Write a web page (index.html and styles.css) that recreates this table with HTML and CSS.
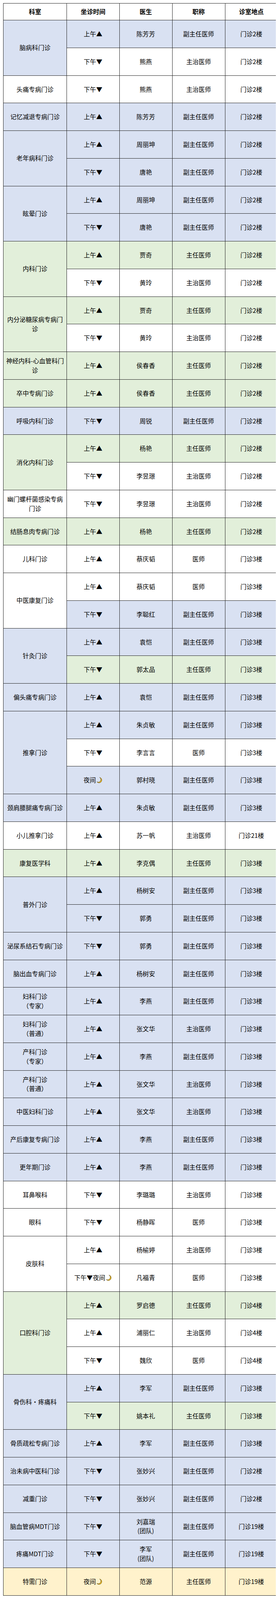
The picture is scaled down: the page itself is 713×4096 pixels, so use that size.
FILE: index.html
```html
<!DOCTYPE html>
<html lang="zh-CN">
<head>
<meta charset="utf-8">
<title>门诊坐诊表</title>
<link rel="stylesheet" href="styles.css">
</head>
<body>
<table class="schedule">
<colgroup>
<col class="c-dept"><col class="c-time"><col class="c-doc"><col class="c-title"><col class="c-loc">
</colgroup>
<thead>
<tr><th>科室</th><th>坐诊时间</th><th>医生</th><th>职称</th><th>诊室地点</th></tr>
</thead>
<tbody>
<tr class="b"><td class="dept" rowspan="2">脑病科门诊</td><td>上午▲</td><td>陈芳芳</td><td>副主任医师</td><td>门诊2楼</td></tr>
<tr class="w"><td>下午▼</td><td>熊燕</td><td>主治医师</td><td>门诊2楼</td></tr>
<tr class="w"><td class="dept">头痛专病门诊</td><td>下午▼</td><td>熊燕</td><td>主治医师</td><td>门诊2楼</td></tr>
<tr class="b"><td class="dept">记忆减退专病门诊</td><td>上午▲</td><td>陈芳芳</td><td>副主任医师</td><td>门诊2楼</td></tr>
<tr class="b"><td class="dept" rowspan="2">老年病科门诊</td><td>上午▲</td><td>周丽坤</td><td>副主任医师</td><td>门诊2楼</td></tr>
<tr class="b"><td>下午▼</td><td>唐艳</td><td>副主任医师</td><td>门诊2楼</td></tr>
<tr class="b"><td class="dept" rowspan="2">眩晕门诊</td><td>上午▲</td><td>周丽坤</td><td>副主任医师</td><td>门诊2楼</td></tr>
<tr class="b"><td>下午▼</td><td>唐艳</td><td>副主任医师</td><td>门诊2楼</td></tr>
<tr class="g"><td class="dept" rowspan="2">内科门诊</td><td>上午▲</td><td>贾奇</td><td>主任医师</td><td>门诊2楼</td></tr>
<tr class="w"><td>下午▼</td><td>黄玲</td><td>主治医师</td><td>门诊2楼</td></tr>
<tr class="g"><td class="dept" rowspan="2">内分泌糖尿病专病门<br>诊</td><td>上午▲</td><td>贾奇</td><td>主任医师</td><td>门诊2楼</td></tr>
<tr class="w"><td>下午▼</td><td>黄玲</td><td>主治医师</td><td>门诊2楼</td></tr>
<tr class="g"><td class="dept">神经内科-心血管科门<br>诊</td><td>上午▲</td><td>侯春香</td><td>主任医师</td><td>门诊2楼</td></tr>
<tr class="g"><td class="dept">卒中专病门诊</td><td>上午▲</td><td>侯春香</td><td>主任医师</td><td>门诊2楼</td></tr>
<tr class="b"><td class="dept">呼吸内科门诊</td><td>下午▼</td><td>周锐</td><td>副主任医师</td><td>门诊2楼</td></tr>
<tr class="g"><td class="dept" rowspan="2">消化内科门诊</td><td>上午▲</td><td>杨艳</td><td>主任医师</td><td>门诊2楼</td></tr>
<tr class="w"><td>下午▼</td><td>李昱璟</td><td>主治医师</td><td>门诊2楼</td></tr>
<tr class="w"><td class="dept">幽门螺杆菌感染专病<br>门诊</td><td>下午▼</td><td>李昱璟</td><td>主治医师</td><td>门诊2楼</td></tr>
<tr class="g"><td class="dept">结肠息肉专病门诊</td><td>上午▲</td><td>杨艳</td><td>主任医师</td><td>门诊2楼</td></tr>
<tr class="w"><td class="dept">儿科门诊</td><td>上午▲</td><td>蔡庆韬</td><td>医师</td><td>门诊3楼</td></tr>
<tr class="w"><td class="dept" rowspan="2">中医康复门诊</td><td>上午▲</td><td>蔡庆韬</td><td>医师</td><td>门诊3楼</td></tr>
<tr class="b"><td>下午▼</td><td>李聪红</td><td>副主任医师</td><td>门诊3楼</td></tr>
<tr class="b"><td class="dept" rowspan="2">针灸门诊</td><td>上午▲</td><td>袁恺</td><td>副主任医师</td><td>门诊3楼</td></tr>
<tr class="g"><td>下午▼</td><td>郭太品</td><td>主任医师</td><td>门诊3楼</td></tr>
<tr class="b"><td class="dept">偏头痛专病门诊</td><td>上午▲</td><td>袁恺</td><td>副主任医师</td><td>门诊3楼</td></tr>
<tr class="b"><td class="dept" rowspan="3">推拿门诊</td><td>上午▲</td><td>朱贞敏</td><td>副主任医师</td><td>门诊3楼</td></tr>
<tr class="w"><td>下午▼</td><td>李言言</td><td>医师</td><td>门诊3楼</td></tr>
<tr class="b"><td>夜间<svg class="moon" viewBox="0 0 16 16" aria-hidden="true"><path d="M8.6 1.2A7 7 0 1 1 1.6 12.4A6 6 0 0 0 8.6 1.2Z"/></svg></td><td>郭村晓</td><td>副主任医师</td><td>门诊3楼</td></tr>
<tr class="b"><td class="dept">颈肩腰腿痛专病门诊</td><td>上午▲</td><td>朱贞敏</td><td>副主任医师</td><td>门诊3楼</td></tr>
<tr class="w"><td class="dept">小儿推拿门诊</td><td>上午▲</td><td>苏一帆</td><td>主治医师</td><td>门诊21楼</td></tr>
<tr class="g"><td class="dept">康复医学科</td><td>上午▲</td><td>李克偶</td><td>主任医师</td><td>门诊3楼</td></tr>
<tr class="b"><td class="dept" rowspan="2">普外门诊</td><td>上午▲</td><td>杨树安</td><td>副主任医师</td><td>门诊3楼</td></tr>
<tr class="b"><td>下午▼</td><td>郭勇</td><td>副主任医师</td><td>门诊3楼</td></tr>
<tr class="b"><td class="dept">泌尿系结石专病门诊</td><td>下午▼</td><td>郭勇</td><td>副主任医师</td><td>门诊3楼</td></tr>
<tr class="b"><td class="dept">脑出血专病门诊</td><td>上午▲</td><td>杨树安</td><td>副主任医师</td><td>门诊3楼</td></tr>
<tr class="b"><td class="dept">妇科门诊<br>（专家）</td><td>上午▲</td><td>李燕</td><td>副主任医师</td><td>门诊3楼</td></tr>
<tr class="b"><td class="dept">妇科门诊<br>（普通）</td><td>上午▲</td><td>张文华</td><td>主治医师</td><td>门诊3楼</td></tr>
<tr class="b"><td class="dept">产科门诊<br>（专家）</td><td>上午▲</td><td>李燕</td><td>副主任医师</td><td>门诊3楼</td></tr>
<tr class="b"><td class="dept">产科门诊<br>（普通）</td><td>上午▲</td><td>张文华</td><td>主治医师</td><td>门诊3楼</td></tr>
<tr class="b"><td class="dept">中医妇科门诊</td><td>上午▲</td><td>张文华</td><td>主治医师</td><td>门诊3楼</td></tr>
<tr class="b"><td class="dept">产后康复专病门诊</td><td>上午▲</td><td>李燕</td><td>副主任医师</td><td>门诊3楼</td></tr>
<tr class="b"><td class="dept">更年期门诊</td><td>上午▲</td><td>李燕</td><td>副主任医师</td><td>门诊3楼</td></tr>
<tr class="w"><td class="dept">耳鼻喉科</td><td>下午▼</td><td>李璐璐</td><td>主治医师</td><td>门诊3楼</td></tr>
<tr class="w"><td class="dept">眼科</td><td>下午▼</td><td>杨静晖</td><td>医师</td><td>门诊3楼</td></tr>
<tr class="w"><td class="dept" rowspan="2">皮肤科</td><td>上午▲</td><td>杨榆婷</td><td>主治医师</td><td>门诊3楼</td></tr>
<tr class="w"><td>下午▼夜间<svg class="moon" viewBox="0 0 16 16" aria-hidden="true"><path d="M8.6 1.2A7 7 0 1 1 1.6 12.4A6 6 0 0 0 8.6 1.2Z"/></svg></td><td>凡福青</td><td>医师</td><td>门诊3楼</td></tr>
<tr class="g"><td class="dept" rowspan="3">口腔科门诊</td><td>上午▲</td><td>罗启德</td><td>主任医师</td><td>门诊4楼</td></tr>
<tr class="w"><td>上午▲</td><td>浦丽仁</td><td>主治医师</td><td>门诊4楼</td></tr>
<tr class="w"><td>下午▼</td><td>魏欣</td><td>医师</td><td>门诊4楼</td></tr>
<tr class="b"><td class="dept" rowspan="2">骨伤科·疼痛科</td><td>上午▲</td><td>李军</td><td>副主任医师</td><td>门诊3楼</td></tr>
<tr class="g"><td>下午▼</td><td>姚本礼</td><td>主任医师</td><td>门诊3楼</td></tr>
<tr class="b"><td class="dept">骨质疏松专病门诊</td><td>上午▲</td><td>李军</td><td>副主任医师</td><td>门诊3楼</td></tr>
<tr class="b"><td class="dept">治未病中医科门诊</td><td>下午▼</td><td>张妙兴</td><td>副主任医师</td><td>门诊2楼</td></tr>
<tr class="b"><td class="dept">减重门诊</td><td>下午▼</td><td>张妙兴</td><td>副主任医师</td><td>门诊2楼</td></tr>
<tr class="b"><td class="dept">脑血管病MDT门诊</td><td>下午▼</td><td>刘嘉瑞<br>(团队)</td><td>副主任医师</td><td>门诊19楼</td></tr>
<tr class="b"><td class="dept">疼痛MDT门诊</td><td>下午▼</td><td>李军<br>(团队)</td><td>副主任医师</td><td>门诊19楼</td></tr>
<tr class="y"><td class="dept">特需门诊</td><td>夜间<svg class="moon" viewBox="0 0 16 16" aria-hidden="true"><path d="M8.6 1.2A7 7 0 1 1 1.6 12.4A6 6 0 0 0 8.6 1.2Z"/></svg></td><td>范源</td><td>主任医师</td><td>门诊19楼</td></tr>
</tbody>
</table>
</body>
</html>
```
FILE: styles.css
```css
html, body {
  background: #ffffff;
}
body {
  margin: 8px;
  font-family: "Noto Sans CJK SC", "Noto Sans", sans-serif;
  color: #000;
}
.schedule {
  border-collapse: collapse;
  table-layout: fixed;
  width: 701px;
  font-size: 15.8px;
  line-height: 1.5;
}
.c-dept { width: 162px; }
.c-time { width: 134.5px; }
.c-doc { width: 135px; }
.c-title { width: 135px; }
.c-loc { width: 134.5px; }
.schedule th,
.schedule td {
  border: 1.3px solid #222;
  text-align: center;
  vertical-align: middle;
  padding: 0 2px;
  white-space: nowrap;
}
.schedule thead tr {
  height: 43px;
}
.schedule th {
  font-weight: 700;
  font-size: 15.8px;
  background: #fff;
}
.schedule tbody tr {
  height: 70.75px;
}
.schedule tr.b td { background: #d9e1f2; }
.schedule tr.g td { background: #e2efda; }
.schedule tr.y td { background: #fff2cc; }
.schedule tr.w td { background: #ffffff; }
.schedule td.dept { background: #ffffff; }
.moon {
  width: 16px;
  height: 16px;
  vertical-align: -2px;
  margin-left: 1px;
  fill: #f7c325;
  stroke: #5a4300;
  stroke-width: 0.9;
}
```
